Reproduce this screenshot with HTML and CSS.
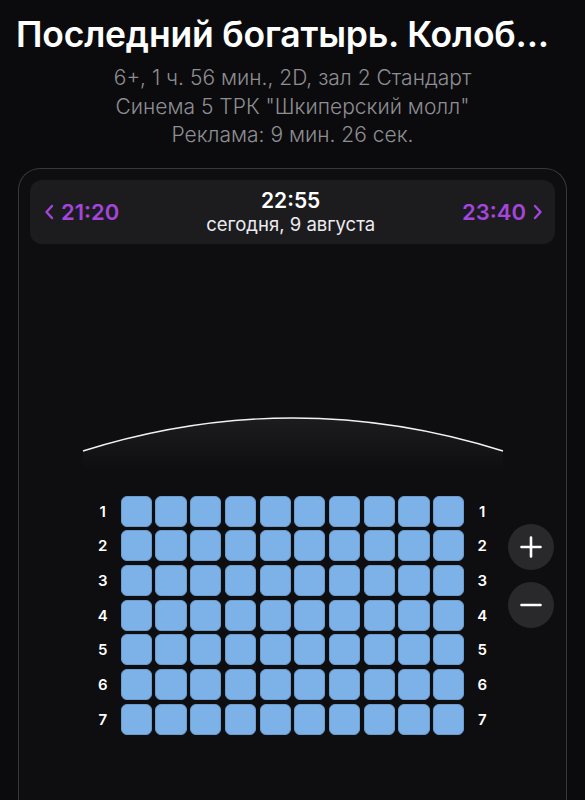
FILE: index.html
```html
<!DOCTYPE html>
<html lang="ru">
<head>
  <meta charset="UTF-8" />
  <meta name="viewport" content="width=device-width, initial-scale=1.0"/>
  <title>Выбор мест</title>
  <link rel="stylesheet" href="styles.css">
</head>
<body>

  <header class="movie">
    <h1 class="movie-title">Последний богатырь. Колоб...</h1>
    <p class="movie-meta">6+, 1 ч. 56 мин., 2D, зал 2 Стандарт</p>
    <p class="movie-meta">Синема 5 ТРК "Шкиперский молл"</p>
    <p class="movie-meta">Реклама: 9 мин. 26 сек.</p>
  </header>

  <section class="card">
    <div class="session">
      <a class="session-link" href="#">
        <svg class="chevron" width="10" height="16" viewBox="0 0 10 16"><path d="M8 2 L2.5 8 L8 14" /></svg>
        21:20
      </a>
      <div class="session-now">
        <div class="session-time">22:55</div>
        <div class="session-date">сегодня, 9 августа</div>
      </div>
      <a class="session-link" href="#">
        23:40
        <svg class="chevron" width="10" height="16" viewBox="0 0 10 16"><path d="M2 2 L7.5 8 L2 14" /></svg>
      </a>
    </div>

    <div class="screen">
      <svg width="424" height="60" viewBox="0 0 424 60">
        <defs>
          <linearGradient id="glow" x1="0" y1="0" x2="0" y2="1">
            <stop offset="0" stop-color="#ffffff" stop-opacity="0.06"/>
            <stop offset="1" stop-color="#ffffff" stop-opacity="0"/>
          </linearGradient>
        </defs>
        <path d="M2 40 Q212 -26 422 40 L422 60 L2 60 Z" fill="url(#glow)" />
        <path d="M2 40 Q212 -26 422 40" fill="none" stroke="#f2f2f2" stroke-width="1.4" />
      </svg>
    </div>

    <div class="hall">
      <div class="row-nums" id="numsLeft"></div>
      <div class="seats" id="seats"></div>
      <div class="row-nums" id="numsRight"></div>
    </div>

    <div class="zoom">
      <button class="zoom-btn">
        <svg width="22" height="22" viewBox="0 0 22 22"><path d="M11 1.5 V20.5 M1.5 11 H20.5" /></svg>
      </button>
      <button class="zoom-btn">
        <svg width="22" height="22" viewBox="0 0 22 22"><path d="M1.5 11 H20.5" /></svg>
      </button>
    </div>
  </section>

  <script>
    const rows = 7;
    const cols = 10;
    const seats = document.getElementById('seats');

    for (let r = 1; r <= rows; r++) {
      ['numsLeft', 'numsRight'].forEach(id => {
        const n = document.createElement('div');
        n.className = 'row-num';
        n.textContent = r;
        document.getElementById(id).appendChild(n);
      });
      for (let c = 1; c <= cols; c++) {
        const seat = document.createElement('div');
        seat.className = 'seat';
        seat.title = 'Ряд ' + r + ', место ' + c;
        seats.appendChild(seat);
      }
    }
  </script>
</body>
</html>
```

FILE: styles.css
```css
body {
  margin: 0;
  padding: 0;
  background-color: #0b0b0d;
  color: #fff;
  font-family: Inter, "Noto Sans", sans-serif;
}
.movie {
  padding: 14px 16px 0;
}
.movie-title {
  margin: 0 0 8px;
  font-size: 35.5px;
  font-weight: 600;
  line-height: 42px;
  white-space: nowrap;
  letter-spacing: -0.2px;
}
.movie-meta {
  margin: 0;
  text-align: center;
  font-size: 21px;
  font-weight: 300;
  line-height: 28.5px;
  color: #8e8e93;
}
.card {
  position: relative;
  margin: 18px 18px 0;
  padding: 11px;
  min-height: 660px;
  background-color: #0e0e10;
  border: 1.5px solid #38383b;
  border-bottom: none;
  border-radius: 22px 22px 0 0;
}
.session {
  display: flex;
  align-items: center;
  justify-content: space-between;
  height: 64px;
  padding: 0 12px 0 14px;
  background-color: #1c1c1f;
  border-radius: 12px;
}
.session-link {
  display: flex;
  align-items: center;
  gap: 7px;
  color: #a445db;
  font-size: 22px;
  font-weight: 600;
  text-decoration: none;
}
.chevron path {
  fill: none;
  stroke: #a445db;
  stroke-width: 2.4;
  stroke-linecap: round;
  stroke-linejoin: round;
}
.session-now {
  text-align: center;
}
.session-time {
  font-size: 21px;
  font-weight: 600;
  line-height: 25px;
}
.session-date {
  font-size: 18.5px;
  line-height: 22px;
  color: #ececf0;
}
.screen {
  display: flex;
  justify-content: center;
  margin-top: 167px;
}
.screen svg {
  display: block;
}
.hall {
  display: flex;
  justify-content: center;
  gap: 9px;
  margin-top: 25px;
}
.row-nums {
  display: grid;
  grid-template-rows: repeat(7, 31px);
  row-gap: 3.7px;
  width: 18px;
}
.row-num {
  font-size: 15px;
  font-weight: 600;
  line-height: 31px;
  text-align: center;
}
.seats {
  display: grid;
  grid-template-columns: repeat(10, 31.3px);
  grid-template-rows: repeat(7, 31px);
  gap: 3.7px 3.4px;
}
.seat {
  background-color: #7db2e8;
  border: 1px solid #6d9ccc;
  border-radius: 6px;
  box-sizing: border-box;
}
.zoom {
  position: absolute;
  top: 355px;
  right: 12px;
  display: flex;
  flex-direction: column;
  gap: 12px;
}
.zoom-btn {
  display: flex;
  align-items: center;
  justify-content: center;
  width: 46px;
  height: 46px;
  padding: 0;
  border: none;
  border-radius: 50%;
  background-color: #29292c;
  cursor: pointer;
}
.zoom-btn path {
  stroke: #fff;
  stroke-width: 2.6;
  stroke-linecap: round;
}
```
